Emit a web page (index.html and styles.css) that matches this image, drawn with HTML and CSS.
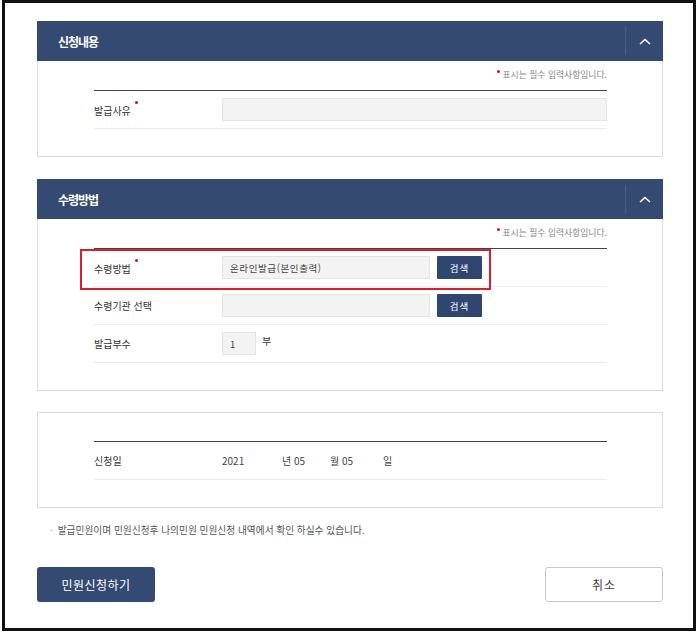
FILE: index.html
```html
<!DOCTYPE html>
<html lang="ko">
<head>
    <meta charset="UTF-8">
    <meta name="viewport" content="width=device-width, initial-scale=1.0">
    <title>민원신청</title>
    <link rel="stylesheet" href="styles.css">
</head>
<body>
    <div class="frame">
        <div class="panel">
            <div class="panel-head">
                <h2 class="panel-title">신청내용</h2>
                <button class="toggle" aria-label="접기">
                    <svg width="12" height="7" viewBox="0 0 12 7"><path d="M1 6 L6 1.5 L11 6" fill="none" stroke="#fff" stroke-width="1.6"/></svg>
                </button>
            </div>
            <div class="panel-body">
                <p class="notice"><span class="dot"></span>표시는 필수 입력사항입니다.</p>
                <div class="form-table">
                    <div class="row">
                        <div class="label">발급사유<span class="req"></span></div>
                        <div class="field"><span class="input wide"></span></div>
                    </div>
                </div>
            </div>
        </div>

        <div class="panel">
            <div class="panel-head">
                <h2 class="panel-title">수령방법</h2>
                <button class="toggle" aria-label="접기">
                    <svg width="12" height="7" viewBox="0 0 12 7"><path d="M1 6 L6 1.5 L11 6" fill="none" stroke="#fff" stroke-width="1.6"/></svg>
                </button>
            </div>
            <div class="panel-body">
                <p class="notice"><span class="dot"></span>표시는 필수 입력사항입니다.</p>
                <div class="form-table">
                    <div class="row highlight">
                        <div class="label">수령방법<span class="req"></span></div>
                        <div class="field">
                            <span class="input mid">온라인발급(본인출력)</span>
                            <button class="btn-search">검색</button>
                        </div>
                    </div>
                    <div class="row">
                        <div class="label">수령기관 선택</div>
                        <div class="field">
                            <span class="input mid"></span>
                            <button class="btn-search">검색</button>
                        </div>
                    </div>
                    <div class="row">
                        <div class="label">발급부수</div>
                        <div class="field">
                            <span class="input small">1</span>
                            <span class="unit">부</span>
                        </div>
                    </div>
                </div>
            </div>
        </div>

        <div class="panel">
            <div class="panel-body boxed">
                <div class="form-table">
                    <div class="row">
                        <div class="label">신청일</div>
                        <div class="field date">
                            <span class="d-year">2021</span>
                            <span class="d-month">년 05</span>
                            <span class="d-day">월 05</span>
                            <span>일</span>
                        </div>
                    </div>
                </div>
            </div>
        </div>

        <p class="info">발급민원이며 민원신청후 나의민원 민원신청 내역에서 확인 하실수 있습니다.</p>

        <div class="actions">
            <button class="btn-submit">민원신청하기</button>
            <button class="btn-cancel">취소</button>
        </div>
    </div>
</body>
</html>
```

FILE: styles.css
```css
* {
    box-sizing: border-box;
}

body {
    margin: 0;
    background-color: #fff;
    font-family: "Noto Sans CJK KR", "Noto Sans", sans-serif;
    color: #333;
}

.frame {
    width: 694px;
    height: 631px;
    margin-left: 2px;
    border: 3px solid #111;
    padding: 18px 30px 0 32px;
}

.panel {
    width: 626px;
    margin-bottom: 22px;
}

.panel:nth-child(2) {
    margin-bottom: 21px;
}

.panel:nth-child(3) {
    margin-bottom: 0;
}

.panel-head {
    display: flex;
    justify-content: space-between;
    align-items: center;
    height: 40px;
    background-color: #344a73;
    padding-left: 21px;
}

.panel-title {
    margin: 0;
    font-size: 12px;
    font-weight: 700;
    letter-spacing: -1px;
    color: #fff;
}

.toggle {
    display: flex;
    justify-content: center;
    align-items: center;
    width: 38px;
    height: 28px;
    padding: 0;
    border: none;
    border-left: 1px solid #4b5f86;
    background: none;
    cursor: pointer;
}

.panel-body {
    border: 1px solid #dcdcdc;
    border-top: none;
    padding: 7px 55px 27px 56px;
}

.panel-body.boxed {
    border-top: 1px solid #dcdcdc;
    padding-top: 28px;
}

.notice {
    margin: 0 0 8px;
    height: 14px;
    line-height: 14px;
    text-align: right;
    font-size: 8.8px;
    color: #888;
}

.dot,
.req {
    display: inline-block;
    width: 3px;
    height: 3px;
    border-radius: 50%;
    background-color: #c8102e;
}

.dot {
    margin-right: 3px;
    vertical-align: 5px;
}

.req {
    margin-left: 4px;
    vertical-align: 11px;
}

.form-table {
    border-top: 1px solid #444;
}

.row {
    position: relative;
    display: flex;
    align-items: center;
    height: 38px;
    border-bottom: 1px solid #ececec;
}

.highlight::after {
    content: "";
    position: absolute;
    left: -14px;
    top: 0;
    width: 407px;
    height: 37px;
    border: 2px solid #d91f2b;
    pointer-events: none;
}

.label {
    width: 128px;
    font-size: 10px;
    color: #333;
}

.field {
    display: flex;
    align-items: center;
    flex: 1;
    font-size: 10px;
}

.input {
    display: flex;
    align-items: center;
    height: 23px;
    padding-left: 7px;
    background-color: #f3f3f3;
    border: 1px solid #e4e4e4;
    font-size: 9.5px;
    letter-spacing: 0.6px;
    color: #444;
}

.input.wide {
    width: 385px;
}

.input.mid {
    width: 208px;
}

.input.small {
    width: 34px;
    letter-spacing: 0;
}

.btn-search {
    width: 45px;
    height: 23px;
    margin-left: 7px;
    padding: 0;
    border: none;
    border-radius: 1px;
    background-color: #2f4670;
    color: #fff;
    font-family: inherit;
    font-size: 9.5px;
    letter-spacing: 1px;
    cursor: pointer;
}

.unit {
    margin-left: 6px;
    margin-top: -6px;
    font-size: 10px;
}

.date span {
    color: #444;
}

.d-year {
    width: 60px;
}

.d-month {
    width: 48px;
}

.d-day {
    width: 53px;
}

.info {
    margin: 15px 0 0;
    padding-left: 13px;
    height: 14px;
    line-height: 14px;
    font-size: 9.7px;
    color: #555;
}

.info::before {
    content: "·";
    margin-right: 5px;
    color: #999;
}

.actions {
    display: flex;
    justify-content: space-between;
    width: 626px;
    margin-top: 30px;
}

.btn-submit,
.btn-cancel {
    width: 118px;
    height: 35px;
    padding: 0;
    border-radius: 3px;
    font-family: inherit;
    font-size: 12px;
    cursor: pointer;
}

.btn-submit {
    border: none;
    background-color: #344a73;
    color: #fff;
    letter-spacing: 0.5px;
}

.btn-cancel {
    border: 1px solid #c8c8c8;
    background-color: #fff;
    color: #444;
    letter-spacing: 1px;
}
```
